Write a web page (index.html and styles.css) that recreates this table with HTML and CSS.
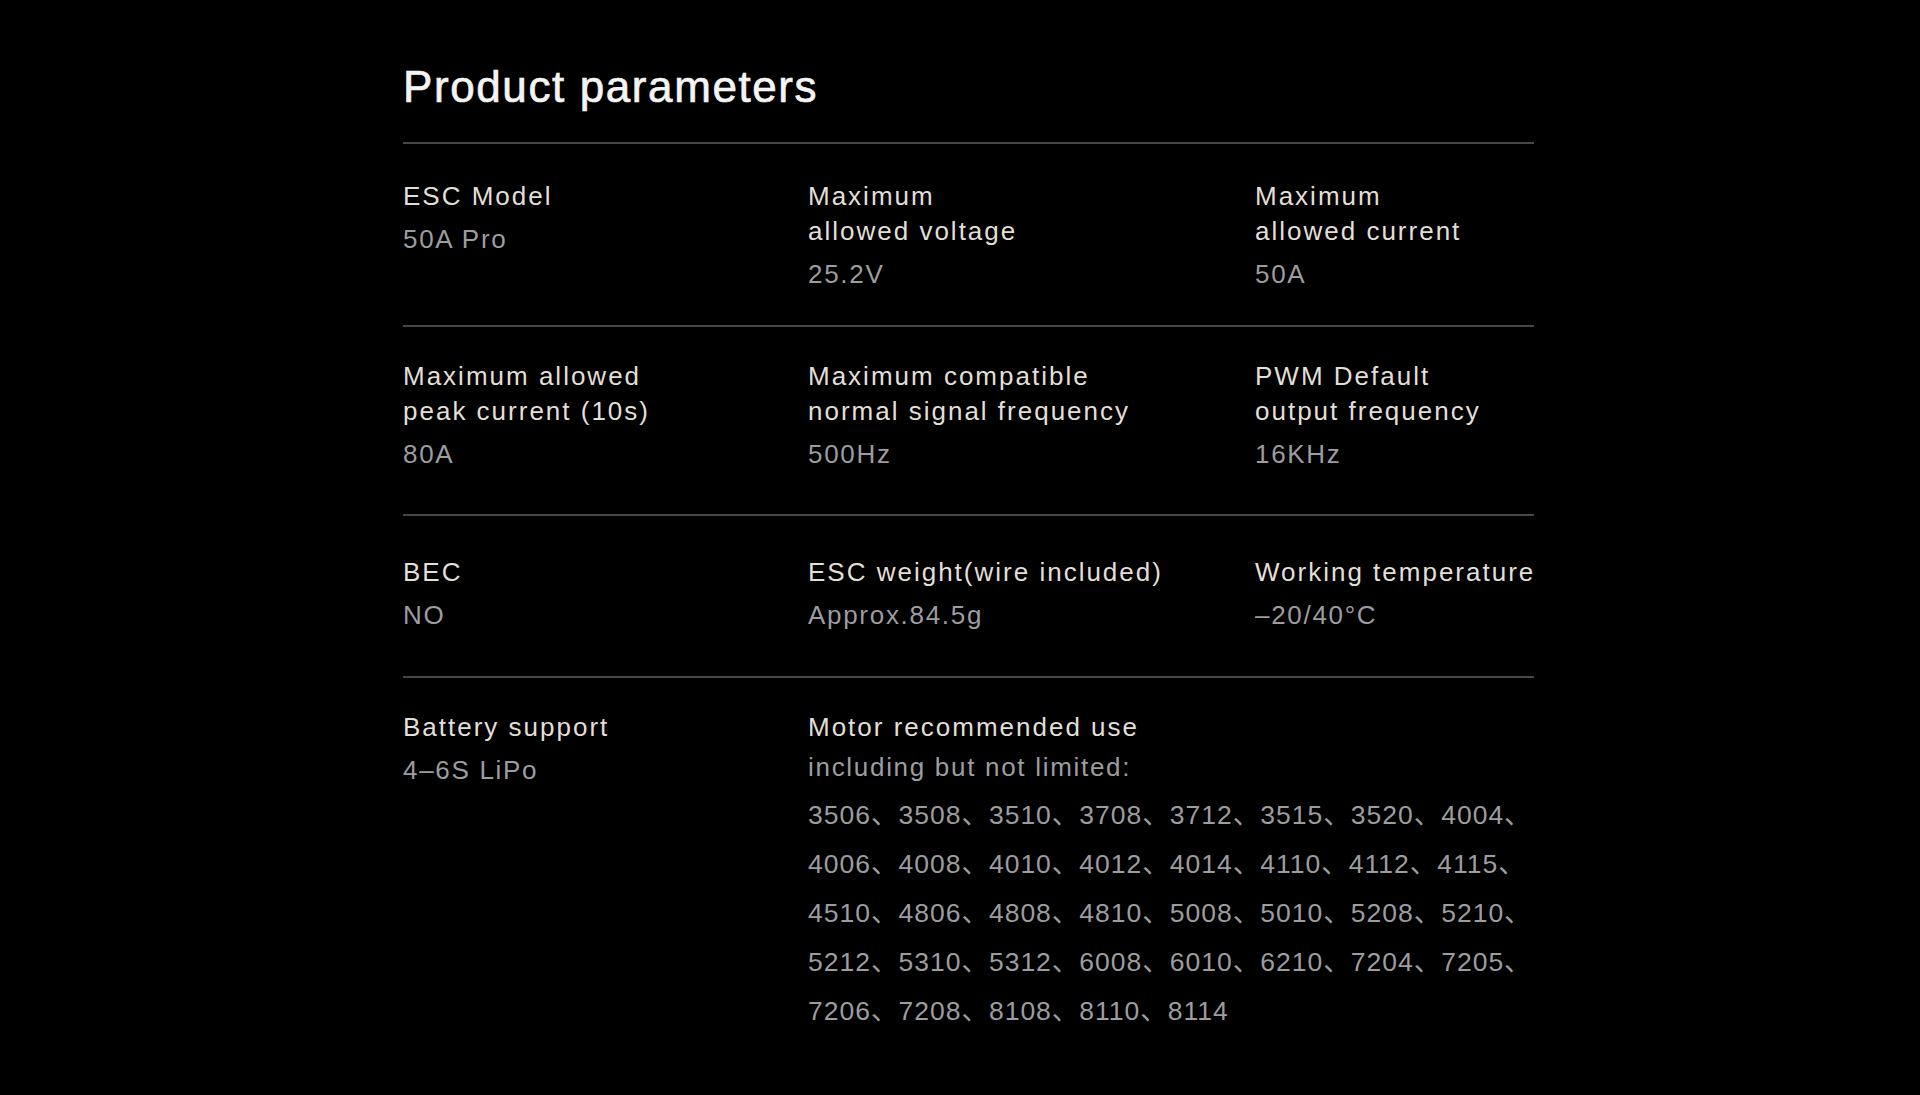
FILE: index.html
```html
<!DOCTYPE html>
<html lang="en">
<head>
<meta charset="utf-8">
<title>Product parameters</title>
<link rel="stylesheet" href="styles.css">
</head>
<body>
<main class="page">
  <h1 class="title">Product parameters</h1>
  <section class="specs">
    <div class="row row-1">
      <div class="cell"><div class="label">ESC Model</div><div class="value">50A Pro</div></div>
      <div class="cell"><div class="label">Maximum<br>allowed voltage</div><div class="value">25.2V</div></div>
      <div class="cell"><div class="label">Maximum<br>allowed current</div><div class="value">50A</div></div>
    </div>
    <div class="row row-2">
      <div class="cell"><div class="label">Maximum allowed<br>peak current (10s)</div><div class="value">80A</div></div>
      <div class="cell"><div class="label">Maximum compatible<br>normal signal frequency</div><div class="value">500Hz</div></div>
      <div class="cell"><div class="label">PWM Default<br>output frequency</div><div class="value">16KHz</div></div>
    </div>
    <div class="row row-3">
      <div class="cell"><div class="label">BEC</div><div class="value">NO</div></div>
      <div class="cell"><div class="label">ESC weight(wire included)</div><div class="value">Approx.84.5g</div></div>
      <div class="cell"><div class="label">Working temperature</div><div class="value">–20/40°C</div></div>
    </div>
    <div class="row row-4">
      <div class="cell"><div class="label">Battery support</div><div class="value">4–6S LiPo</div></div>
      <div class="cell cell-wide">
        <div class="label">Motor recommended use</div>
        <div class="value value-sub">including but not limited:</div>
        <div class="motors">
          <span class="motor-line">3506、3508、3510、3708、3712、3515、3520、4004、</span>
          <span class="motor-line">4006、4008、4010、4012、4014、4110、4112、4115、</span>
          <span class="motor-line">4510、4806、4808、4810、5008、5010、5208、5210、</span>
          <span class="motor-line">5212、5310、5312、6008、6010、6210、7204、7205、</span>
          <span class="motor-line">7206、7208、8108、8110、8114</span>
        </div>
      </div>
    </div>
  </section>
</main>
</body>
</html>
```
FILE: styles.css
```css
html, body {
  margin: 0;
  padding: 0;
  background: #000;
}

body {
  font-family: "Liberation Sans", Arial, "Noto Sans CJK SC", sans-serif;
  color: #e2dfd7;
  min-height: 1095px;
}

.page {
  padding: 61px 0 40px 403px;
  width: 1131px;
}

.title {
  margin: 0 0 29px;
  font-size: 44px;
  line-height: 52px;
  font-weight: 400;
  letter-spacing: 1.6px;
  color: #f4f4f2;
  -webkit-text-stroke: 0.7px #f4f4f2;
}

.row {
  display: grid;
  grid-template-columns: 405px 447px 1fr;
  border-top: 2px solid #47474a;
}

.row-1 { padding: 35px 0 33px; }
.row-2 { padding: 32px 0 42px; }
.row-3 { padding: 39px 0 43px; }
.row-4 { padding: 32px 0 0; }

.cell-wide {
  grid-column: 2 / 4;
}

.label {
  font-size: 26px;
  line-height: 35px;
  letter-spacing: 2px;
  color: #e2dfd7;
  white-space: nowrap;
}

.value {
  margin-top: 8px;
  font-size: 26px;
  line-height: 35px;
  letter-spacing: 1.7px;
  color: #9d9ca1;
  white-space: nowrap;
}

.value-sub {
  margin-top: 5px;
}

.motors {
  margin-top: 6px;
  font-size: 26.5px;
  line-height: 49px;
  letter-spacing: 1px;
  color: #9d9ca1;
}

.motor-line {
  display: block;
  white-space: nowrap;
}
```
